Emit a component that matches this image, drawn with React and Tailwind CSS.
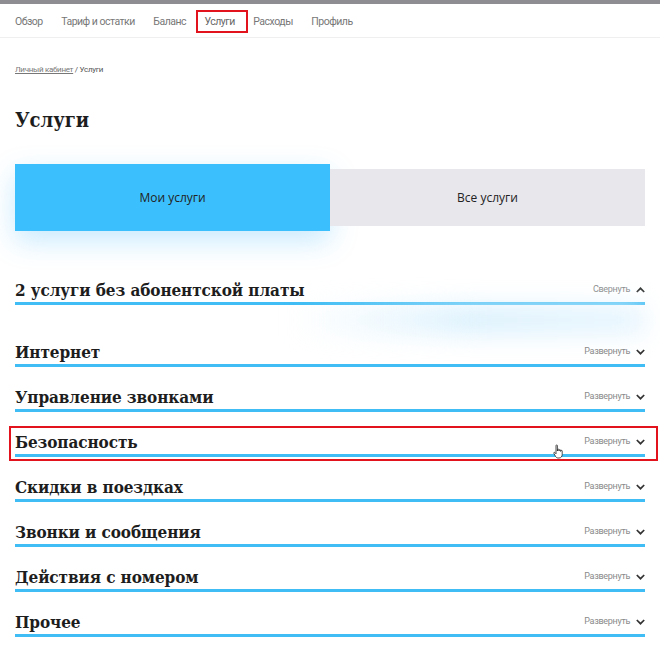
import React from 'react';

const sans = { fontFamily: 'Roboto, "Open Sans", sans-serif' };
const tabFont = { fontFamily: '"Open Sans", "Noto Sans", sans-serif' };
const slab = {
    fontFamily: '"DejaVu Serif Condensed", "DejaVu Serif", "Liberation Serif", serif',
    fontStretch: 'condensed',
};

const navItems = ['Обзор', 'Тариф и остатки', 'Баланс', 'Услуги', 'Расходы', 'Профиль'];

const sections = [
    'Интернет',
    'Управление звонками',
    'Безопасность',
    'Скидки в поездках',
    'Звонки и сообщения',
    'Действия с номером',
    'Прочее',
];

const Chevron = ({ up }) => (
    <svg width="9" height="6" viewBox="0 0 9 6" className="ml-[6px]">
        <path
            d={up ? 'M0.8 5 L4.5 1.3 L8.2 5' : 'M0.8 1 L4.5 4.7 L8.2 1'}
            fill="none"
            stroke="#333"
            strokeWidth="1.7"
        />
    </svg>
);

const Cursor = () => (
    <svg width="12" height="15" viewBox="0 0 12 15" className="absolute left-[542px] top-[16px]">
        <path
            d="M3 1.5 C3 0.8 4.4 0.8 4.4 1.5 L4.4 7 L4.6 5.6 C4.6 5 6 5 6 5.6 L6 7 L6.2 6.2 C6.2 5.6 7.6 5.6 7.6 6.2 L7.6 7.4 L7.8 6.8 C7.8 6.2 9.2 6.2 9.2 6.8 L9.2 10.5 C9.2 12.5 8 14 6 14 L5 14 C3.8 14 3 13.2 2.4 12.2 L0.8 9.2 C0.5 8.6 1.3 8 1.8 8.5 L3 9.8 Z"
            fill="#fff"
            stroke="#222"
            strokeWidth="0.8"
        />
    </svg>
);

const SectionRow = ({ title, action = 'Развернуть', up = false, className = '', children }) => (
    <div className={`relative ${className}`}>
        <div className="flex items-center justify-between h-[24px]">
            <h2 style={slab} className="text-[17px] font-bold text-[#1d1d1d] leading-[24px] tracking-[-0.1px]">
                {title}
            </h2>
            <div className="flex items-center">
                <span style={sans} className="text-[9px] text-[#8a8a8a] tracking-[-0.3px]">{action}</span>
                <Chevron up={up} />
            </div>
        </div>
        <div className="h-[3px] bg-[#3fbdf4]" />
        {children}
    </div>
);

export default function App() {
    return (
        <div className="w-[660px] min-h-[649px] bg-white overflow-hidden">
            <div className="h-[4px] bg-[#8d8d92]" />
            <nav style={sans} className="h-[34px] pt-[2px] border-b border-[#efefef] flex items-center gap-[18.5px] px-[15px] text-[10.5px] text-[#777] tracking-[-0.5px]">
                {navItems.map(item =>
                    item === 'Услуги' ? (
                        <span key={item} className="h-[23px] flex items-center -ml-[9px] -mr-[13px] pl-[7px] pr-[11px] border-2 border-[#e3131d] text-[#666]">
                            {item}
                        </span>
                    ) : (
                        <span key={item}>{item}</span>
                    )
                )}
            </nav>

            <div className="px-[15px]">
                <div style={sans} className="mt-[26px] text-[8px] leading-[12px] text-[#777] tracking-[-0.3px]">
                    <span className="underline">Личный кабинет</span> <span className="text-[#555]">/ Услуги</span>
                </div>

                <h1 style={slab} className="mt-[30px] text-[20px] font-bold leading-[28px] text-[#1d1d1d]">
                    Услуги
                </h1>

                <div style={tabFont} className="mt-[30px] flex items-center text-[12px] text-[#222]">
                    <div className="w-[315px] h-[67px] flex items-center justify-center bg-[#3bc0fd] shadow-[0_10px_28px_rgba(59,180,253,0.28)]">
                        Мои услуги
                    </div>
                    <div className="flex-1 h-[57px] flex items-center justify-center bg-[#e8e7ec]">
                        Все услуги
                    </div>
                </div>

                <SectionRow title="2 услуги без абонентской платы" action="Свернуть" up className="mt-[47px]">
                    <div className="absolute left-[280px] right-0 top-[28px] h-[28px] bg-gradient-to-r from-transparent via-[#d9f0fd] to-[#e6f5fe] blur-md" />
                </SectionRow>

                <div className="mt-[35px] flex flex-col gap-[18px]">
                    {sections.map(s =>
                        s === 'Безопасность' ? (
                            <div key={s} className="relative -ml-[6px] -mr-[13px] -my-[4px] pl-[4px] pr-[11px] py-[2px] border-2 border-[#e3131d]">
                                <SectionRow title={s} />
                                <Cursor />
                            </div>
                        ) : (
                            <SectionRow key={s} title={s} />
                        )
                    )}
                </div>
            </div>
        </div>
    );
}
